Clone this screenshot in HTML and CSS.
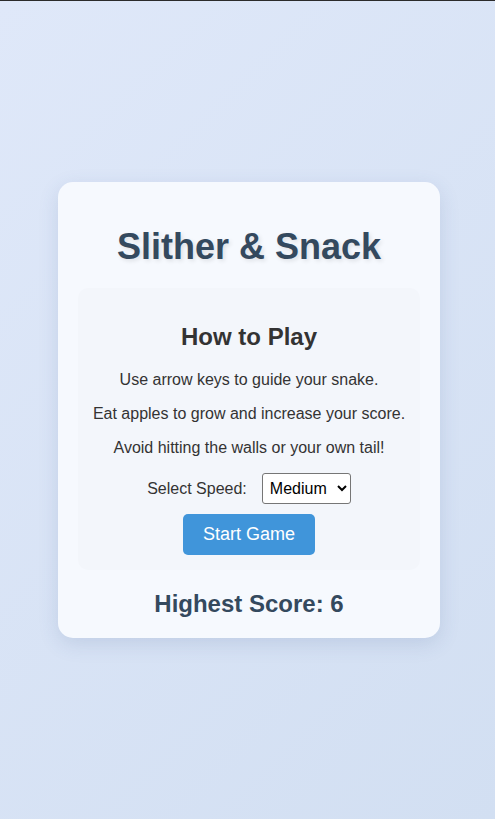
FILE: index.html
```html
<!DOCTYPE html>
<html lang="en">
<head>
<meta charset="utf-8">
<title>Slither &amp; Snack</title>
<link rel="stylesheet" href="styles.css">
</head>
<body>
<main class="card">
  <h1 class="title">Slither &amp; Snack</h1>
  <section class="howto">
    <h2 class="howto-title">How to Play</h2>
    <p class="rule">Use arrow keys to guide your snake.</p>
    <p class="rule">Eat apples to grow and increase your score.</p>
    <p class="rule">Avoid hitting the walls or your own tail!</p>
    <div class="speed-row">
      <label class="speed-label" for="speed">Select Speed:</label>
      <select id="speed" class="speed-select">
        <option>Slow</option>
        <option selected>Medium</option>
        <option>Fast</option>
      </select>
    </div>
    <button class="start-btn">Start Game</button>
  </section>
  <h2 class="score">Highest Score: 6</h2>
</main>
</body>
</html>
```

FILE: styles.css
```css
html {
  height: 100%;
}
body {
  margin: 0;
  height: 100vh;
  box-sizing: border-box;
  border-top: 1px solid #2b2b2b;
  font-family: "Liberation Sans", Arial, sans-serif;
  background: linear-gradient(135deg, #dfe8f9 0%, #d2dff2 100%);
  display: flex;
  align-items: center;
  justify-content: center;
}
.card {
  width: 342px;
  padding: 20px;
  margin-left: 3px;
  background: #f6f9fe;
  border-radius: 15px;
  box-shadow: 0 6px 20px rgba(60, 90, 140, 0.15);
  text-align: center;
}
.title {
  margin: 24px 0 20px;
  font-size: 36px;
  font-weight: bold;
  color: #34495e;
  text-shadow: 2px 2px 4px rgba(0, 0, 0, 0.1);
}
.howto {
  background: #f3f6fb;
  border-radius: 10px;
  padding: 15px 8px;
}
.howto-title {
  margin: 20px 0;
  font-size: 24px;
  color: #333;
}
.rule {
  margin: 16px 0 15.5px;
  font-size: 16px;
  color: #333;
  white-space: nowrap;
}
.speed-row {
  display: flex;
  align-items: center;
  justify-content: center;
  gap: 15px;
  margin-top: 16px;
}
.speed-label {
  font-size: 16px;
  color: #333;
}
.speed-select {
  font-family: "Liberation Sans", Arial, sans-serif;
  font-size: 16px;
  padding: 5px 3px;
  width: 89px;
  height: 31px;
  border: 1px solid #767676;
  border-radius: 3px;
  background: #fff;
  color: #000;
}
.start-btn {
  margin-top: 10px;
  font-family: "Liberation Sans", Arial, sans-serif;
  font-size: 18px;
  color: #fff;
  background: #4095da;
  border: none;
  border-radius: 5px;
  padding: 10px 20px;
  cursor: pointer;
}
.score {
  margin: 20px 0 0;
  font-size: 24px;
  color: #34495e;
}
```
